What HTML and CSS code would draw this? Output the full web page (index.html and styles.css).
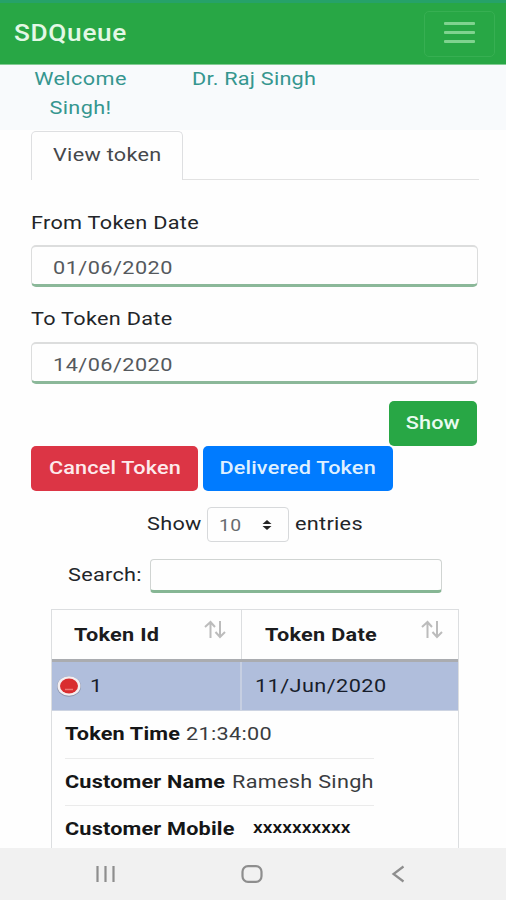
FILE: index.html
```
<!DOCTYPE html>
<html lang="en">
<head>
<meta charset="utf-8">
<title>SDQueue</title>
<link rel="stylesheet" href="styles.css">
</head>
<body>
<div class="screen">
  <header class="navbar">
    <span class="brand wide">SDQueue</span>
    <button class="toggler" aria-label="Menu"><span class="bar"></span><span class="bar"></span><span class="bar"></span></button>
  </header>
  <section class="welcome">
    <div class="greeting wide mid">Welcome<br>Singh!</div>
    <div class="doctor wide">Dr. Raj Singh</div>
  </section>
  <main class="content">
    <nav class="tabs"><a class="tab"><span class="wide">View token</span></a></nav>
    <label class="label from"><span class="wide">From Token Date</span></label>
    <div class="field"><span class="wide">01/06/2020</span></div>
    <label class="label to"><span class="wide">To Token Date</span></label>
    <div class="field"><span class="wide">14/06/2020</span></div>
    <div class="submit"><button class="btn show"><span class="wide mid">Show</span></button></div>
    <div class="actions">
      <button class="btn cancel"><span class="wide mid">Cancel Token</span></button>
      <button class="btn delivered"><span class="wide mid">Delivered Token</span></button>
    </div>
    <div class="length">
      <span class="length-show"><span class="wide">Show</span></span>
      <span class="select"><span class="wide">10</span>
        <svg width="10" height="12" viewBox="0 0 10 12"><path d="M0.500 5L5 1L9.500 5ZM0.500 7H9.500L5 11Z" fill="#252525"/></svg>
      </span>
      <span class="length-entries wide">entries</span>
    </div>
    <div class="search"><div class="search-label"><span class="wide">Search:</span></div><div class="search-box"></div></div>
    <div class="table">
      <div class="thead">
        <div class="th"><span class="wide">Token Id</span>
          <svg class="sort" width="22" height="20" viewBox="0 0 22 20"><path d="M6.500 18V2M1 7L6.500 2L11 7M16 1V17M11.500 12L16 17L21 12"/></svg></div>
        <div class="th"><span class="wide">Token Date</span>
          <svg class="sort" width="22" height="20" viewBox="0 0 22 20"><path d="M6.500 18V2M1 7L6.500 2L11 7M16 1V17M11.500 12L16 17L21 12"/></svg></div>
      </div>
      <div class="row">
        <div class="td"><svg class="dot" width="26" height="22" viewBox="0 0 26 22"><ellipse cx="13" cy="11.500" rx="12" ry="10.300" fill="#8c96ad"/><ellipse cx="13" cy="11" rx="11.500" ry="9.800" fill="#f4eef0"/><ellipse cx="13" cy="11" rx="9" ry="7.500" fill="#d92d2f"/><path d="M9 14.500H17" stroke="#ee7774" stroke-width="1.500"/></svg><span class="wide">1</span></div>
        <div class="td date"><span class="wide">11/Jun/2020</span></div>
      </div>
      <div class="details">
        <div class="detail"><div class="key time"><b class="wide">Token Time</b></div><span class="wide">21:34:00</span></div>
        <div class="detail"><div class="key name"><b class="wide">Customer Name</b></div><span class="wide">Ramesh Singh</span></div>
        <div class="detail"><div class="key mobile"><b class="wide">Customer Mobile</b></div><span class="wide masked">xxxxxxxxxx</span></div>
      </div>
    </div>
  </main>
  <footer class="sysnav">
    <svg width="22" height="18" viewBox="0 0 22 18"><path d="M2.500 1V17M10.500 1V17M18.500 1V17"/></svg>
    <svg width="22" height="18" viewBox="0 0 22 18"><rect x="1.500" y="1.200" width="19" height="15.600" rx="5.500"/></svg>
    <svg width="22" height="18" viewBox="0 0 22 18"><path d="M16.500 1.500L6.500 9L16.500 16.500"/></svg>
  </footer>
</div>
</body>
</html>
```
FILE: styles.css
```
* { box-sizing: border-box; }
body {
  margin: 0;
  background: #fefefe;
  font-family: Roboto, "Liberation Sans", sans-serif;
  font-size: 19px;
  letter-spacing: 0.26px;
  color: #222529;
}
button { font: inherit; letter-spacing: inherit; margin: 0; }
.wide { display: inline-block; transform: scaleX(1.14); transform-origin: 0 50%; }
.mid { transform-origin: 50% 50%; }
.screen { width: 506px; height: 900px; display: flex; flex-direction: column; overflow: hidden; white-space: nowrap; }

.navbar {
  height: 65px;
  flex: none;
  padding: 0 11px 0 14px;
  display: flex;
  align-items: center;
  justify-content: space-between;
  background: #28a745;
  border-top: 3px solid #26a269;
  border-bottom: 1px solid #83cb94;
}
.brand { color: #e3f8e5; font-size: 23px; font-weight: 500; letter-spacing: 0.6px; line-height: 28px; }
.toggler {
  width: 71px;
  height: 46px;
  padding: 0 0 2px;
  display: flex;
  flex-direction: column;
  align-items: center;
  justify-content: center;
  gap: 6px;
  background: none;
  border: 1px solid #37af52;
  border-radius: 5px;
}
.bar { width: 31px; height: 3px; background: #7fd38f; border-radius: 1px; }

.welcome { height: 65px; flex: none; display: flex; background: #f8fafc; color: #35968f; line-height: 29px; padding-left: 31px; }
.greeting { width: 99px; text-align: center; margin-top: -1px; letter-spacing: 0.35px; }
.doctor { margin: -1px 0 0 62px; letter-spacing: 0.2px; }

.content { flex: 1; min-height: 0; overflow: hidden; padding: 1px 27px 0 31px; }
.tabs { height: 49px; border-bottom: 1px solid #e2e2e2; display: flex; }
.tab { width: 152px; height: 49px; border: 1px solid #dedfe1; border-bottom: 0; border-radius: 5px 5px 0 0; background: #fefefe; color: #45484b; padding-left: 21px; line-height: 46px; }
.label { display: block; line-height: 29px; }
.from { margin: 28px 0 8px; }
.to { margin: 17px 0 9px; }
.field { width: 447px; height: 42px; border: 1px solid #dcdddd; border-top-width: 2px; border-bottom: 3px solid #8bb899; border-radius: 5px; padding-left: 21px; line-height: 42px; color: #55595d; letter-spacing: 0.4px; }
.submit { display: flex; justify-content: flex-end; margin: 17px 2px 0 0; }
.btn { height: 45px; border: 0; border-radius: 5px; color: #e9fbf0; padding: 0 0 1px; text-align: center; line-height: 42px; font-weight: 500; letter-spacing: 0.15px; }
.show { width: 88px; background: #28a745; }
.actions { display: flex; gap: 5px; }
.cancel { width: 167px; background: #dc3545; color: #fdeaec; }
.delivered { width: 190px; background: #007bff; color: #dff0ff; }

.length { display: flex; align-items: center; height: 35px; margin: 16px 0 0 116px; }
.length-show { width: 60px; padding-bottom: 2px; }
.length-entries { margin-left: 6px; padding-bottom: 2px; }
.select { width: 82px; height: 35px; border: 1px solid #d7d9db; border-radius: 4px; padding: 0 16px 0 11px; display: flex; align-items: center; justify-content: space-between; color: #666a6e; font-size: 17px; }
.search { display: flex; margin: 17px 0 0 37px; line-height: 32px; }
.search-label { width: 82px; }
.search-box { width: 292px; height: 34px; border: 1px solid #d0d4d2; border-bottom: 3px solid #86b694; border-radius: 4px; }

.table { width: 408px; height: 260px; margin: 16px 0 0 20px; border: 1px solid #dcdee0; }
.thead { display: flex; height: 52px; border-bottom: 3px solid #aaacb0; }
.th { display: flex; justify-content: space-between; font-weight: 700; line-height: 50px; color: #1b1c1e; }
.th:first-child { width: 190px; border-right: 1px solid #dcdee0; padding: 0 15px 0 22px; }
.th:last-child { flex: 1; padding: 0 15px 0 23px; }
.sort { margin-top: 10px; fill: none; stroke: #bcbcbc; stroke-width: 2; }
.row { display: flex; height: 49px; background: #b0bedc; line-height: 46px; color: #171d2b; border-bottom: 1px solid #cdd4e2; }
.td { display: flex; align-items: center; padding-bottom: 1px; }
.td:first-child { width: 190px; border-right: 2px solid #c6cfe2; padding-left: 4px; gap: 8px; }
.td.date { padding-left: 13px; letter-spacing: 0.38px; }
.details { padding: 0 0 0 13px; }
.detail { display: flex; width: 309px; height: 47.500px; border-bottom: 1px solid #ebebeb; line-height: 45px; color: #3a3c3f; }
.key { color: #151617; letter-spacing: 0.15px; }
.key b { font-weight: 700; }
.time { width: 121px; }
.name { width: 167px; }
.mobile { width: 188px; }
.masked { color: #111; font-size: 17px; letter-spacing: 0; line-height: 43px; font-weight: 500; }

.sysnav { flex: none; height: 52px; background: #f1f1f1; display: flex; align-items: center; padding-left: 95px; gap: 124px; }
.sysnav svg { fill: none; stroke: #8e8e8e; stroke-width: 2.200; }
```
